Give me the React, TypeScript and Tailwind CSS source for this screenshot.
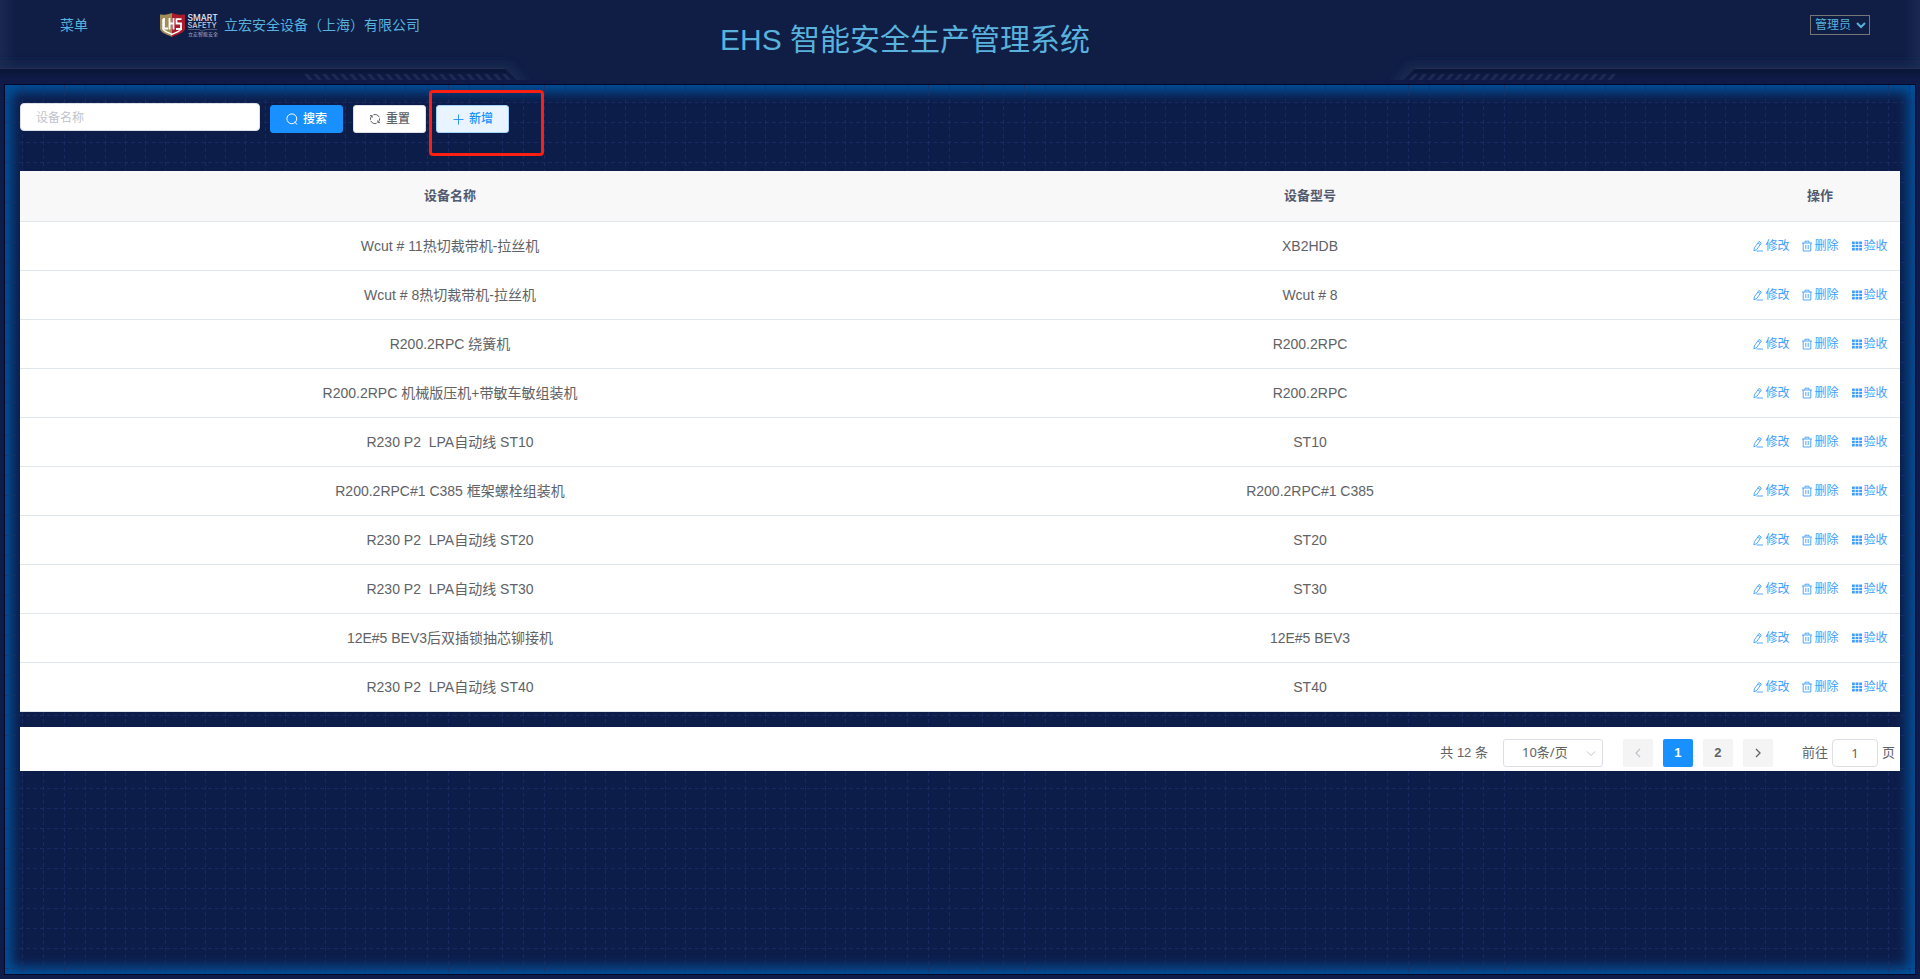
import type { ReactNode } from 'react'

const devices = [
  { name: 'Wcut # 11热切裁带机-拉丝机', model: 'XB2HDB' },
  { name: 'Wcut # 8热切裁带机-拉丝机', model: 'Wcut # 8' },
  { name: 'R200.2RPC 绕簧机', model: 'R200.2RPC' },
  { name: 'R200.2RPC 机械版压机+带敏车敏组装机', model: 'R200.2RPC' },
  { name: 'R230 P2  LPA自动线 ST10', model: 'ST10' },
  { name: 'R200.2RPC#1 C385 框架螺栓组装机', model: 'R200.2RPC#1 C385' },
  { name: 'R230 P2  LPA自动线 ST20', model: 'ST20' },
  { name: 'R230 P2  LPA自动线 ST30', model: 'ST30' },
  { name: '12E#5 BEV3后双插锁抽芯铆接机', model: '12E#5 BEV3' },
  { name: 'R230 P2  LPA自动线 ST40', model: 'ST40' },
]

function Icon({ children, className = 'size-3' }: { children: ReactNode; className?: string }) {
  return (
    <svg viewBox="0 0 12 12" fill="none" stroke="currentColor" className={`shrink-0 ${className}`} aria-hidden="true">
      {children}
    </svg>
  )
}

const SearchIcon = () => (
  <Icon>
    <circle cx="5.8" cy="5.8" r="4.9" />
    <path d="M8.500 9l2.700 2.500" />
  </Icon>
)

const RefreshIcon = () => (
  <Icon>
    <path d="M1.500 6.800A4.500 4.500 0 0 1 2.800 2.800M4.400 1.800a4.500 4.500 0 0 1 5.800 2.400M10.500 5.400a4.500 4.500 0 0 1-1.300 4M7.600 10.300a4.500 4.500 0 0 1-5.800-2.400" />
    <path d="M1 2.600h2.200v2.200M11 9.500H8.800V7.300" strokeWidth="0.900" />
  </Icon>
)

const PlusIcon = () => (
  <Icon>
    <path d="M6.5 1.5v10M1.5 6.5h10" strokeWidth="0.9" />
  </Icon>
)

const EditIcon = () => (
  <Icon>
    <path d="M2.400 7.800L7 1.400l2.300 1.600-4.600 6.600-2.800 1.200zM6 3l2.300 1.600" strokeWidth="0.9" />
    <path d="M4.500 11h6.500" strokeWidth="0.9" />
  </Icon>
)

const DeleteIcon = () => (
  <Icon>
    <path d="M1 3h10M4 2.8V1.2h4v1.6M2.2 3v8h7.6V3M4.8 5v4M7.2 5v4" strokeWidth="0.9" />
  </Icon>
)

const GridIcon = () => (
  <Icon>
    <path
      d="M1 1.500h2.800v2.500H1zM4.600 1.500h2.800v2.500H4.600zM8.200 1.500H11v2.500H8.200zM1 4.800h2.800v2.500H1zM4.600 4.800h2.800v2.500H4.600zM8.200 4.800H11v2.500H8.200zM1 8.100h2.800v2.500H1zM4.600 8.100h2.800v2.500H4.600zM8.200 8.100H11v2.500H8.200z"
      fill="currentColor"
      stroke="none"
    />
  </Icon>
)

function Logo() {
  return (
    <svg viewBox="0 0 60 26" className="h-[26px] w-[60px]" aria-label="LHS Smart Safety" role="img">
      <path d="M12 1C8 2.6 4 3 0 2.6V17c1 4 7 5.500 12 8z" fill="#a18d58" />
      <path d="M12 1c4 1.600 8 2 13 1.600V17c-1 4-8 5.500-13 8z" fill="#ab1b2b" />
      <path d="M3 7v10c1 2.500 5 3.500 9 5.300 4-1.800 8-2.800 9-5.300v-2" fill="none" stroke="#fff" strokeWidth="1.500" />
      <path d="M4 6v10.500H8M9.500 6v11.500M13.500 6v11.500M9.500 11.500h4M21.500 7.200h-5v4.300h4.500V17h-5" fill="none" stroke="#fff" strokeWidth="1.800" />
      <text x="27.500" y="8.500" fill="#e8eaf2" fontSize="8.500" fontWeight="500" fontFamily="Inter, sans-serif">SMART</text>
      <text x="27.500" y="15.500" fill="#c9cddb" fontSize="7.500" fontWeight="500" fontFamily="Inter, sans-serif">SAFETY</text>
      <path d="M28 17.500h11l3 1.800 3-1.800h12" fill="none" stroke="#6f7791" strokeWidth="0.700" />
      <text x="28" y="23.500" fill="#aeb4c8" fontSize="5" fontFamily="'Noto Sans CJK SC', sans-serif">立宏智能安全</text>
    </svg>
  )
}

// One half of the header's bevelled lower edge; the right half is mirrored.
function HeaderWing({ side }: { side: 'left' | 'right' }) {
  return (
    <svg
      viewBox="0 0 560 84"
      className={`absolute top-0 h-[84px] w-[560px] ${side === 'left' ? 'left-0' : 'right-0 -scale-x-100'}`}
      aria-hidden="true"
    >
      <defs>
        <linearGradient id={`edge-${side}`} x1="0" x2="1">
          <stop offset="0" stopColor="#1a2952" />
          <stop offset="1" stopColor="#1a2952" stopOpacity="0" />
        </linearGradient>
        <linearGradient id={`under-${side}`} x1="0" x2="0" y1="0" y2="1">
          <stop offset="0" stopColor="#091534" />
          <stop offset="1" stopColor="#0f1b49" />
        </linearGradient>
        <filter id={`soft-${side}`} x="-10%" y="-100%" width="120%" height="300%">
          <feGaussianBlur stdDeviation="5" />
        </filter>
      </defs>
      <rect width="16" height="68" fill={`url(#edge-${side})`} />
      <path d="M-20 63h530l16 17v10H-20z" fill="#1a2952" fillOpacity="0.8" filter={`url(#soft-${side})`} />
      <path d="M0 68h505l12 12H0z" fill={`url(#under-${side})`} />
      <path d="M0 80h560v4H0z" fill="#0f1b46" />
      <path d="M0 68.500h505" stroke="#243059" />
      <path d="M505 68.500l12 11.500" stroke="#1a2750" />
      {Array.from({ length: 23 }, (_, i) => (
        <path key={i} d={`M${304 + i * 9} 74h4l5 6h-4z`} fill="#1d2b54" />
      ))}
    </svg>
  )
}

const gridColumns = [17, 38, 59, 80, 100, 120, 140, 160, 180, 200, 220, 240, 260, 280, 300, 320, 340, 360, 380, 400, 422, 443, 464]
const gridRows = Array.from({ length: 16 }, (_, i) => 17 + i * 20)

function GridBackdrop() {
  return (
    <svg className="absolute inset-0 size-full" aria-hidden="true">
      <pattern id="dashes" width="480" height="333" patternUnits="userSpaceOnUse">
        <g stroke="#1c2f68" strokeOpacity="0.7" strokeDasharray="4 3" shapeRendering="crispEdges">
          {gridColumns.map((x) => (
            <path key={x} d={`M${x + 0.5} 0v333`} />
          ))}
          {gridRows.map((y) => (
            <path key={y} d={`M0 ${y + 0.5}h480`} />
          ))}
        </g>
      </pattern>
      <rect width="100%" height="100%" fill="url(#dashes)" />
    </svg>
  )
}

function Header() {
  return (
    <header className="relative h-[84px] bg-[#101d45] text-[#58b2dc]">
      <HeaderWing side="left" />
      <HeaderWing side="right" />
      <div className="relative grid grid-cols-[660fr_1150fr] items-start pr-[50px] pl-[60px]">
        <div className="flex h-[50px] items-center text-sm">
          <a href="#menu" className="w-[100px]">菜单</a>
          <Logo />
          <span className="ml-1">立宏安全设备（上海）有限公司</span>
        </div>
        <div className="flex items-start justify-between">
          <h1 className="pt-[19px] text-[30px] leading-[42px]">EHS 智能安全生产管理系统</h1>
          <select aria-label="当前用户" className="mt-[15px] h-5 w-[60px] border border-[#767676] text-xs">
            <option>管理员</option>
          </select>
        </div>
      </div>
    </header>
  )
}

function SearchBar() {
  const button = 'flex h-7 w-[73px] items-center justify-center gap-[5px] rounded-[3px] border'
  return (
    <form className="flex items-start gap-[10px] text-xs" onSubmit={(e) => e.preventDefault()}>
      <input
        aria-label="设备名称"
        placeholder="设备名称"
        className="h-7 w-60 rounded border border-[#dcdfe6] bg-white px-[15px] pt-[2px] text-[#606266] placeholder:text-[#c0c4cc]"
      />
      <div className="flex gap-[10px] pt-[2px]">
        <button type="submit" className={`${button} border-[#1890ff] bg-[#1890ff] font-medium text-white`}>
          <SearchIcon />
          搜索
        </button>
        <button type="reset" className={`${button} border-[#dcdfe6] bg-white font-medium text-[#606266]`}>
          <RefreshIcon />
          重置
        </button>
        <div className="relative">
          <button type="button" className={`${button} border-[#a3d3ff] bg-[#e8f4ff] font-medium text-[#1890ff]`}>
            <PlusIcon />
            新增
          </button>
          <div className="pointer-events-none absolute -top-[15px] -left-[7px] h-[66px] w-[115px] rounded-[4px] border-[3px] border-[#fc1f12]" />
        </div>
      </div>
    </form>
  )
}

function DeviceTable() {
  return (
    <table className="mt-[38px] w-full table-fixed border-separate border-spacing-0 bg-white text-center text-sm text-[#606266]">
      <thead>
        <tr className="bg-[#f8f8f9] text-[13px] text-[#515a6e]">
          <th className="h-[51px] border-b border-[#dfe6ec]">设备名称</th>
          <th className="border-b border-[#dfe6ec]">设备型号</th>
          <th className="w-40 border-b border-[#dfe6ec]">操作</th>
        </tr>
      </thead>
      <tbody>
        {devices.map((device) => (
          <tr key={device.name}>
            <td className="h-[49px] border-b border-[#dfe6ec] whitespace-pre">{device.name}</td>
            <td className="border-b border-[#dfe6ec]">{device.model}</td>
            <td className="border-b border-[#dfe6ec]">
              <div className="flex justify-center gap-3 text-xs text-[#409eff]">
                <button className="flex items-center gap-px"><EditIcon />修改</button>
                <button className="flex items-center gap-px"><DeleteIcon />删除</button>
                <button className="flex items-center gap-px"><GridIcon />验收</button>
              </div>
            </td>
          </tr>
        ))}
      </tbody>
    </table>
  )
}

function Pagination() {
  const page = 'flex h-7 w-[30px] items-center justify-center rounded-[2px] font-bold'
  return (
    <nav className="mt-[15px] flex h-11 items-center justify-end bg-white pt-2 pr-[5px] text-[13px] text-[#606266]" aria-label="分页">
      <span>共 12 条</span>
      <div className="relative ml-[15px]">
        <select
          aria-label="每页条数"
          className="h-7 w-[100px] appearance-none rounded-[3px] border border-[#dcdfe6] bg-white pl-[18px] font-['Noto_Sans','Noto_Sans_CJK_SC',sans-serif]"
        >
          <option>10条/页</option>
        </select>
        <Icon className="pointer-events-none absolute top-2 right-[6px] size-3 text-[#c0c4cc]">
          <path d="M2 4.500l4 4 4-4" />
        </Icon>
      </div>
      <div className="mx-5 flex gap-[10px]">
        <button aria-label="上一页" className={`${page} bg-[#f4f4f5] text-[#c0c4cc]`}>
          <Icon><path d="M8 2L4 6l4 4" strokeWidth="1.300" /></Icon>
        </button>
        <button className={`${page} bg-[#1890ff] text-white`}>1</button>
        <button className={`${page} bg-[#f4f4f5]`}>2</button>
        <button aria-label="下一页" className={`${page} bg-[#f4f4f5]`}>
          <Icon><path d="M4 2l4 4-4 4" strokeWidth="1.300" /></Icon>
        </button>
      </div>
      <label className="ml-[9px] flex items-center gap-1">
        前往
        <input
          defaultValue="1"
          className="h-7 w-[46px] rounded border border-[#dcdfe6] bg-white text-center font-['Noto_Sans',sans-serif]"
        />
        页
      </label>
    </nav>
  )
}

export default function App() {
  return (
    <div className="flex min-h-screen flex-col bg-[#0f1b48] font-['Liberation_Sans','Noto_Sans_CJK_SC',sans-serif]">
      <Header />
      <main className="relative mx-1 mb-1 flex-1 border border-[#03082d] bg-[#0d1d4a] px-[15px] pt-[18px] pb-6 shadow-[inset_0_0_12px_7px_#02519b]">
        <GridBackdrop />
        <div className="relative">
          <SearchBar />
          <DeviceTable />
          <Pagination />
        </div>
      </main>
    </div>
  )
}
